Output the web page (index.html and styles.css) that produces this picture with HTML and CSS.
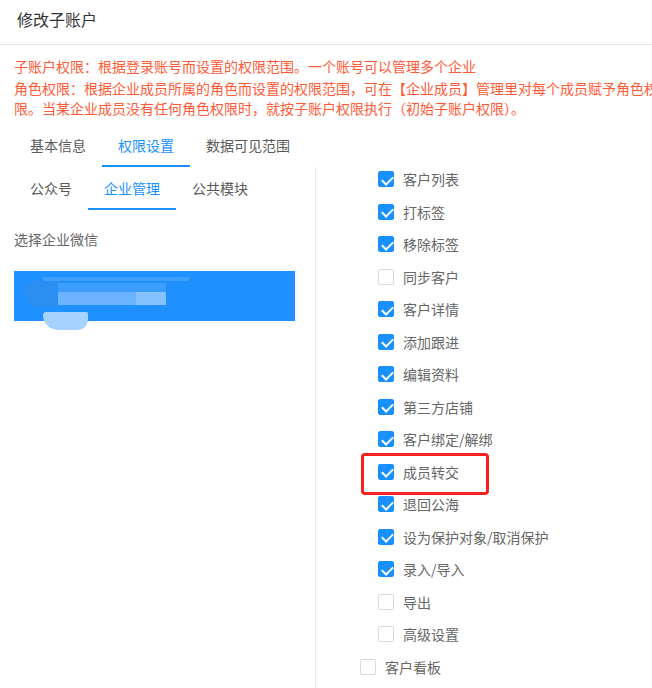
FILE: index.html
```html
<!DOCTYPE html>
<html lang="zh-CN">
<head>
<meta charset="utf-8">
<title>修改子账户</title>
<link rel="stylesheet" href="styles.css">
</head>
<body>
<div class="modal">
  <div class="modal-header"><h2 class="title">修改子账户</h2></div>
  <div class="notice">
    <p class="notice-p1">子账户权限：根据登录账号而设置的权限范围。一个账号可以管理多个企业</p>
    <p class="notice-p2">角色权限：根据企业成员所属的角色而设置的权限范围，可在【企业成员】管理里对每个成员赋予角色权<br>限。当某企业成员没有任何角色权限时，就按子账户权限执行（初始子账户权限）。</p>
  </div>
  <div class="tabs tabs-main">
    <div class="tab">基本信息</div>
    <div class="tab active">权限设置</div>
    <div class="tab">数据可见范围</div>
  </div>
  <div class="panel">
    <div class="panel-left">
      <div class="tabs tabs-sub">
        <div class="tab">公众号</div>
        <div class="tab active">企业管理</div>
        <div class="tab">公共模块</div>
      </div>
      <div class="select-label">选择企业微信</div>
      <div class="corp-item">
        <span class="blur blur-top"></span>
        <span class="blur blur-left"></span>
        <span class="blur blur-row1"></span>
        <span class="blur blur-row2"></span>
        <span class="blur blur-row2b"></span>
        <span class="blur blur-bottom"></span>
      </div>
    </div>
    <div class="panel-right">
      <ul class="perm-list">
        <li class="perm child"><span class="cb on"></span><span class="label">客户列表</span></li>
        <li class="perm child"><span class="cb on"></span><span class="label">打标签</span></li>
        <li class="perm child"><span class="cb on"></span><span class="label">移除标签</span></li>
        <li class="perm child"><span class="cb"></span><span class="label">同步客户</span></li>
        <li class="perm child"><span class="cb on"></span><span class="label">客户详情</span></li>
        <li class="perm child"><span class="cb on"></span><span class="label">添加跟进</span></li>
        <li class="perm child"><span class="cb on"></span><span class="label">编辑资料</span></li>
        <li class="perm child"><span class="cb on"></span><span class="label">第三方店铺</span></li>
        <li class="perm child"><span class="cb on"></span><span class="label">客户绑定/解绑</span></li>
        <li class="perm child"><span class="cb on"></span><span class="label">成员转交</span></li>
        <li class="perm child"><span class="cb on"></span><span class="label">退回公海</span></li>
        <li class="perm child"><span class="cb on"></span><span class="label">设为保护对象/取消保护</span></li>
        <li class="perm child"><span class="cb on"></span><span class="label">录入/导入</span></li>
        <li class="perm child"><span class="cb"></span><span class="label">导出</span></li>
        <li class="perm child"><span class="cb"></span><span class="label">高级设置</span></li>
        <li class="perm"><span class="cb"></span><span class="label">客户看板</span></li>
      </ul>
      <div class="highlight"></div>
    </div>
  </div>
</div>
</body>
</html>
```
FILE: styles.css
```css
* { box-sizing: border-box; }
html, body {
  margin: 0;
  padding: 0;
  background: #fff;
  overflow: hidden;
}
body {
  font-family: "Noto Sans CJK SC", "Noto Sans", sans-serif;
  font-size: 14px;
  color: #666;
}
.modal {
  width: 652px;
  height: 688px;
  overflow: hidden;
}
.modal-header {
  height: 45px;
  padding: 7px 0 0 17px;
  border-bottom: 1px solid #e8e8e8;
}
.title {
  margin: 0;
  font-size: 16px;
  font-weight: normal;
  line-height: 24px;
  color: #333;
}
.notice {
  padding: 11px 0 0 14px;
  color: #ff5a36;
  white-space: nowrap;
  line-height: 20px;
}
.notice p { margin: 0; }
.notice-p1 { margin-bottom: 2px !important; }
.tabs {
  display: flex;
  padding-left: 14px;
}
.tabs-main { margin-top: 7px; }
.tab {
  padding: 10px 16px 10px;
  line-height: 20px;
  border-bottom: 2px solid transparent;
  color: #595959;
}
.tabs-sub .tab { padding: 11px 16px 10px; }
.tab.active {
  color: #1890ff;
  border-bottom-color: #1890ff;
}
.panel {
  display: flex;
  min-height: 530px;
}
.panel-left {
  width: 316px;
  flex: none;
  border-right: 1px solid #e8e8e8;
}
.select-label {
  margin-top: 19px;
  padding-left: 14px;
  line-height: 20px;
  color: #666;
}
.corp-item {
  position: relative;
  margin: 22px 0 0 14px;
  width: 281px;
  height: 50px;
  background: #1e90ff;
}
.blur {
  position: absolute;
  display: block;
}
.blur-top {
  left: 28px; top: 6px; width: 148px; height: 4px;
  background: #3a9dff;
  border-radius: 2px;
}
.blur-left {
  left: 11px; top: 10px; width: 36px; height: 26px;
  background: #2a8ff0;
  border-radius: 10px 4px 4px 14px;
}
.blur-row1 {
  left: 44px; top: 12px; width: 108px; height: 9px;
  background: #3b9eff;
}
.blur-row2 {
  left: 44px; top: 21px; width: 78px; height: 13px;
  background: #6cb4ff;
}
.blur-row2b {
  left: 122px; top: 21px; width: 30px; height: 13px;
  background: #86c2ff;
}
.blur-bottom {
  left: 29px; top: 41px; width: 45px; height: 18px;
  background: #a6d2ff;
  border-radius: 4px 2px 14px 20px;
}
.panel-right {
  position: relative;
  flex: 1;
}
.perm-list {
  list-style: none;
  margin: -4.25px 0 0;
  padding: 0;
}
.perm {
  display: flex;
  align-items: center;
  height: 32.5px;
  padding-left: 44px;
  color: #666;
  line-height: 20px;
}
.perm.child { padding-left: 62px; }
.cb {
  position: relative;
  width: 16px;
  height: 16px;
  flex: none;
  border: 1px solid #d9d9d9;
  border-radius: 2px;
  background: #fff;
}
.cb.on {
  background: #1890ff;
  border-color: #1890ff;
}
.cb.on::after {
  content: "";
  position: absolute;
  left: 4.5px;
  top: 1.5px;
  width: 5px;
  height: 9px;
  border: solid #fff;
  border-width: 0 2px 2px 0;
  transform: rotate(45deg);
}
.label { margin-left: 9px; }
.highlight {
  position: absolute;
  left: 45px;
  top: 285.5px;
  width: 128px;
  height: 42px;
  border: 3px solid #f5201f;
  border-radius: 4px;
}
```
